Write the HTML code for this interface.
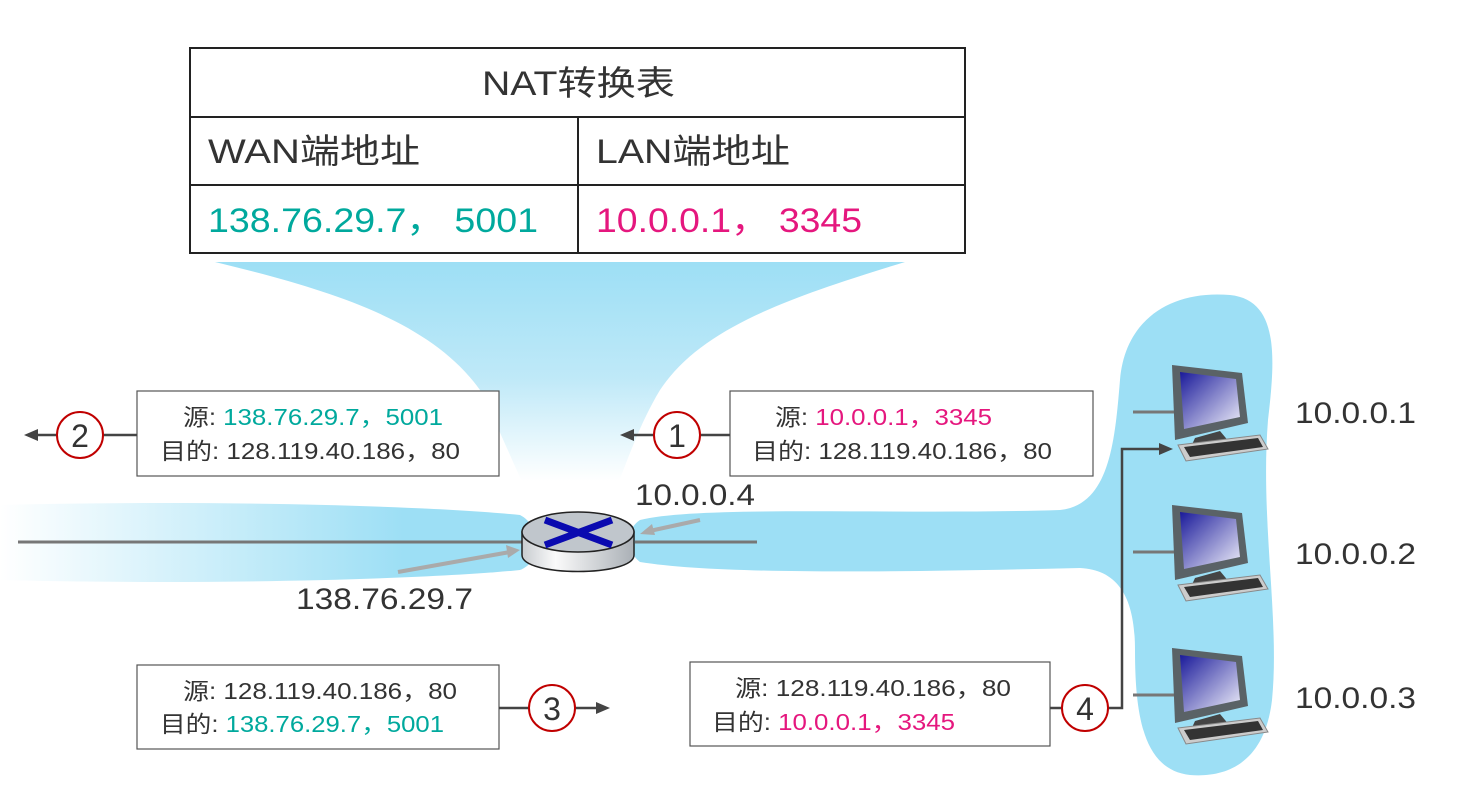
<!DOCTYPE html>
<html><head><meta charset="utf-8"><style>
body{margin:0;background:#fff;}
svg{display:block;font-family:"Liberation Sans","Noto Sans CJK SC",sans-serif;}
</style></head><body>
<svg width="1461" height="803" viewBox="0 0 1461 803" xmlns="http://www.w3.org/2000/svg">
<defs>
<linearGradient id="fun" x1="0" y1="0" x2="0" y2="1">
<stop offset="0" stop-color="#9ddff5"/><stop offset="0.45" stop-color="#bfe9f8"/><stop offset="0.85" stop-color="#fff"/></linearGradient>
<linearGradient id="lft" x1="0" y1="0" x2="1" y2="0">
<stop offset="0" stop-color="#fff"/><stop offset="0.75" stop-color="#9ddff5"/></linearGradient>
<linearGradient id="scr" x1="0" y1="0" x2="1" y2="1">
<stop offset="0" stop-color="#1a1a9a"/><stop offset="1" stop-color="#f0f0fa"/></linearGradient>
<linearGradient id="rside" x1="0" y1="0" x2="1" y2="0">
<stop offset="0" stop-color="#c8ccd0"/><stop offset="0.3" stop-color="#fafafa"/><stop offset="1" stop-color="#aab0b6"/></linearGradient>
<g id="pc">
<path d="M52 0 L122 8 L128 58 L55 75 Z" fill="#5a6266"/>
<path d="M60 7 L116 14 L120 52 L64 64 Z" fill="url(#scr)"/>
<path d="M75 73 L100 66 L110 78 L70 84 Z" fill="#444"/>
<path d="M58 80 L140 70 L148 84 L66 96 Z" fill="#ccc" stroke="#888"/>
<path d="M64 82 L138 73 L143 82 L70 92 Z" fill="#333"/>
</g>
</defs>
<path d="M215 262 L905 262 C 780 300 700 330 660 390 C 630 440 620 490 600 520 L540 520 C 520 480 500 430 480 390 C 430 320 330 290 215 262 Z" fill="url(#fun)"/>
<path d="M0 505 C 200 500 420 505 520 515 C 540 525 545 560 520 570 C 420 580 200 585 0 580 Z" fill="url(#lft)"/>
<path d="M640 520 C 700 505 900 515 1060 510 C 1110 505 1115 440 1120 380 C 1125 320 1170 290 1230 295 C 1280 300 1275 360 1268 420 C 1260 520 1280 620 1272 700 C 1265 760 1230 778 1190 775 C 1145 770 1135 720 1135 650 C 1135 600 1120 570 1080 568 C 900 572 720 575 640 562 C 625 550 625 530 640 520 Z" fill="#9ddff5"/>
<g stroke="#222" stroke-width="2" fill="none">
<rect x="190" y="48" width="775" height="205"/>
<line x1="190" y1="117" x2="965" y2="117"/><line x1="190" y1="185" x2="965" y2="185"/>
<line x1="578" y1="117" x2="578" y2="253"/>
</g>
<g font-size="34" lengthAdjust="spacingAndGlyphs">
<text x="482" y="95" fill="#333" textLength="193" lengthAdjust="spacingAndGlyphs">NAT转换表</text>
<text x="208" y="163" fill="#333" textLength="212" lengthAdjust="spacingAndGlyphs">WAN端地址</text>
<text x="596" y="163" fill="#333" textLength="194" lengthAdjust="spacingAndGlyphs">LAN端地址</text>
<text x="208" y="232" fill="#00a99d" textLength="330" lengthAdjust="spacingAndGlyphs">138.76.29.7， 5001</text>
<text x="596" y="232" fill="#e5177e" textLength="266" lengthAdjust="spacingAndGlyphs">10.0.0.1， 3345</text>
</g>
<g stroke="#777" stroke-width="3">
<line x1="18" y1="542" x2="525" y2="542"/><line x1="635" y1="542" x2="757" y2="542"/>
<line x1="1133" y1="412" x2="1180" y2="412"/><line x1="1133" y1="552" x2="1180" y2="552"/><line x1="1133" y1="695" x2="1180" y2="695"/>
</g>
<g stroke="#aaa" stroke-width="4"><line x1="700" y1="520" x2="645" y2="532"/><line x1="398" y1="572" x2="510" y2="552"/></g>
<path d="M640 534 L652 524 L655 535 Z" fill="#aaa"/><path d="M520 550 L506 545 L508 558 Z" fill="#aaa"/>
<path d="M522 532 L522 555 C522 577 634 577 634 555 L634 532 Z" fill="url(#rside)" stroke="#222" stroke-width="1.5"/>
<ellipse cx="578" cy="532" rx="56" ry="20" fill="#c0c6cc" stroke="#222" stroke-width="1.5"/>
<g stroke="#0a0ab0" stroke-width="7"><line x1="545" y1="520" x2="612" y2="545"/><line x1="612" y1="520" x2="545" y2="545"/></g>
<text x="635" y="505" font-size="30" fill="#333" textLength="120" lengthAdjust="spacingAndGlyphs">10.0.0.4</text>
<text x="296" y="609" font-size="30" fill="#333" textLength="177" lengthAdjust="spacingAndGlyphs">138.76.29.7</text>
<use href="#pc" x="1120" y="365"/><use href="#pc" x="1120" y="505"/><use href="#pc" x="1120" y="648"/>
<text x="1295" y="423" font-size="30" fill="#333" textLength="121" lengthAdjust="spacingAndGlyphs">10.0.0.1</text>
<text x="1295" y="564" font-size="30" fill="#333" textLength="121" lengthAdjust="spacingAndGlyphs">10.0.0.2</text>
<text x="1295" y="708" font-size="30" fill="#333" textLength="121" lengthAdjust="spacingAndGlyphs">10.0.0.3</text>
<g fill="#fff" stroke="#555" stroke-width="1.2">
<rect x="137" y="391" width="362" height="85"/><rect x="730" y="391" width="363" height="85"/>
<rect x="137" y="665" width="362" height="84"/><rect x="690" y="662" width="360" height="84"/>
</g>
<g font-size="23" fill="#333">
<text x="183" y="425" textLength="260" lengthAdjust="spacingAndGlyphs">源: <tspan fill="#00a99d">138.76.29.7，5001</tspan></text>
<text x="160" y="459" textLength="300" lengthAdjust="spacingAndGlyphs">目的: 128.119.40.186，80</text>
<text x="775" y="425" textLength="217" lengthAdjust="spacingAndGlyphs">源: <tspan fill="#e5177e">10.0.0.1，3345</tspan></text>
<text x="752" y="459" textLength="300" lengthAdjust="spacingAndGlyphs">目的: 128.119.40.186，80</text>
<text x="183" y="699" textLength="274" lengthAdjust="spacingAndGlyphs">源: 128.119.40.186，80</text>
<text x="160" y="732" textLength="284" lengthAdjust="spacingAndGlyphs">目的: <tspan fill="#00a99d">138.76.29.7，5001</tspan></text>
<text x="735" y="696" textLength="276" lengthAdjust="spacingAndGlyphs">源: 128.119.40.186，80</text>
<text x="712" y="730" textLength="243" lengthAdjust="spacingAndGlyphs">目的: <tspan fill="#e5177e">10.0.0.1，3345</tspan></text>
</g>
<g stroke="#444" stroke-width="2.5" fill="none">
<line x1="36" y1="435" x2="57" y2="435"/><line x1="103" y1="435" x2="137" y2="435"/>
<line x1="632" y1="435" x2="654" y2="435"/><line x1="700" y1="435" x2="730" y2="435"/>
<line x1="499" y1="708" x2="529" y2="708"/><line x1="575" y1="708" x2="598" y2="708"/>
<line x1="1050" y1="708" x2="1062" y2="708"/>
<polyline points="1108,708 1122,708 1122,449 1160,449"/>
</g>
<g fill="#444">
<path d="M24 435 L38 429 L38 441 Z"/><path d="M620 435 L634 429 L634 441 Z"/>
<path d="M610 708 L596 702 L596 714 Z"/><path d="M1173 449 L1159 443 L1159 455 Z"/>
</g>
<g fill="#fff" stroke="#c00000" stroke-width="2">
<circle cx="80" cy="435" r="23"/><circle cx="677" cy="435" r="23"/><circle cx="552" cy="708" r="23"/><circle cx="1085" cy="708" r="23"/>
</g>
<g font-size="32" fill="#333" text-anchor="middle">
<text x="80" y="447">2</text><text x="677" y="447">1</text><text x="552" y="720">3</text><text x="1085" y="720">4</text>
</g>
</svg>
</body></html>
